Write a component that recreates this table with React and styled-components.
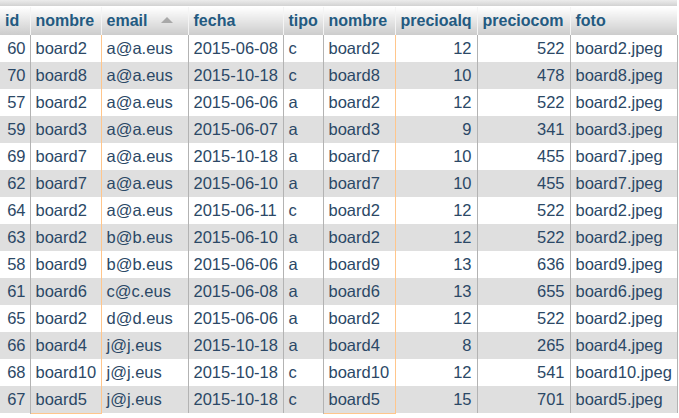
import React from 'react';
import styled, { createGlobalStyle } from 'styled-components';

const GlobalStyle = createGlobalStyle`
  body {
    margin: 0;
    background: #fff;
    font-family: 'Liberation Sans', Arial, sans-serif;
  }
`;

const TopStrip = styled.div`
  height: 6px;
  width: 677px;
  background: linear-gradient(#ececec, #d2d2d2);
  border-bottom: 1px solid #fff;
`;

const Table = styled.table`
  border-collapse: collapse;
  table-layout: fixed;
  width: 677px;
  font-size: 16.5px;
`;

const Th = styled.th`
  height: 28px;
  padding: 0 5px;
  text-align: left;
  font-size: 16px;
  font-weight: bold;
  color: #235a81;
  white-space: nowrap;
  background: linear-gradient(#ffffff, #cccccc);
  border-right: 1px solid #f4f4f4;
  box-sizing: border-box;
  &:last-child {
    border-right: none;
  }
`;

const SortArrow = styled.span`
  display: inline-block;
  margin-left: 14px;
  width: 0;
  height: 0;
  border-left: 6px solid transparent;
  border-right: 6px solid transparent;
  border-bottom: 6px solid #a8a8a8;
  vertical-align: 3px;
`;

const Tr = styled.tr`
  background: ${p => (p.$odd ? '#dfdfdf' : '#ffffff')};
`;

const Td = styled.td`
  height: 27px;
  padding: 0 5px;
  color: #2b4866;
  white-space: nowrap;
  overflow: hidden;
  text-align: ${p => (p.$num ? 'right' : 'left')};
  border-right: 1px solid ${p => (p.$marked ? '#ffc68c' : '#b3b3b3')};
  border-bottom: ${p => (p.$marked && p.$last ? '1px solid #ffc68c' : 'none')};
  box-sizing: border-box;
  &:first-child {
    padding-right: 4px;
  }
`;

const columns = [
  { key: 'id', label: 'id', width: 30, num: true },
  { key: 'nombre', label: 'nombre', width: 71, marked: true },
  { key: 'email', label: 'email', width: 87, sorted: true },
  { key: 'fecha', label: 'fecha', width: 95 },
  { key: 'tipo', label: 'tipo', width: 40 },
  { key: 'nombre2', label: 'nombre', width: 72, marked: true },
  { key: 'precioalq', label: 'precioalq', width: 82, num: true },
  { key: 'preciocom', label: 'preciocom', width: 93, num: true },
  { key: 'foto', label: 'foto', width: 107 },
];

const rows = [
  [60, 'board2', 'a@a.eus', '2015-06-08', 'c', 'board2', 12, 522, 'board2.jpeg'],
  [70, 'board8', 'a@a.eus', '2015-10-18', 'c', 'board8', 10, 478, 'board8.jpeg'],
  [57, 'board2', 'a@a.eus', '2015-06-06', 'a', 'board2', 12, 522, 'board2.jpeg'],
  [59, 'board3', 'a@a.eus', '2015-06-07', 'a', 'board3', 9, 341, 'board3.jpeg'],
  [69, 'board7', 'a@a.eus', '2015-10-18', 'a', 'board7', 10, 455, 'board7.jpeg'],
  [62, 'board7', 'a@a.eus', '2015-06-10', 'a', 'board7', 10, 455, 'board7.jpeg'],
  [64, 'board2', 'a@a.eus', '2015-06-11', 'c', 'board2', 12, 522, 'board2.jpeg'],
  [63, 'board2', 'b@b.eus', '2015-06-10', 'a', 'board2', 12, 522, 'board2.jpeg'],
  [58, 'board9', 'b@b.eus', '2015-06-06', 'a', 'board9', 13, 636, 'board9.jpeg'],
  [61, 'board6', 'c@c.eus', '2015-06-08', 'a', 'board6', 13, 655, 'board6.jpeg'],
  [65, 'board2', 'd@d.eus', '2015-06-06', 'a', 'board2', 12, 522, 'board2.jpeg'],
  [66, 'board4', 'j@j.eus', '2015-10-18', 'a', 'board4', 8, 265, 'board4.jpeg'],
  [68, 'board10', 'j@j.eus', '2015-10-18', 'c', 'board10', 12, 541, 'board10.jpeg'],
  [67, 'board5', 'j@j.eus', '2015-10-18', 'c', 'board5', 15, 701, 'board5.jpeg'],
];

export default function App() {
  return (
    <>
      <GlobalStyle />
      <TopStrip />
      <Table>
        <colgroup>
          {columns.map(c => <col key={c.key} style={{ width: c.width }} />)}
        </colgroup>
        <thead>
          <tr>
            {columns.map(c => (
              <Th key={c.key}>
                {c.label}
                {c.sorted && <SortArrow />}
              </Th>
            ))}
          </tr>
        </thead>
        <tbody>
          {rows.map((r, i) => (
            <Tr key={i} $odd={i % 2 === 1}>
              {r.map((v, j) => (
                <Td
                  key={j}
                  $num={columns[j].num}
                  $marked={columns[j].marked}
                  $last={i === rows.length - 1}
                >
                  {v}
                </Td>
              ))}
            </Tr>
          ))}
        </tbody>
      </Table>
    </>
  );
}
